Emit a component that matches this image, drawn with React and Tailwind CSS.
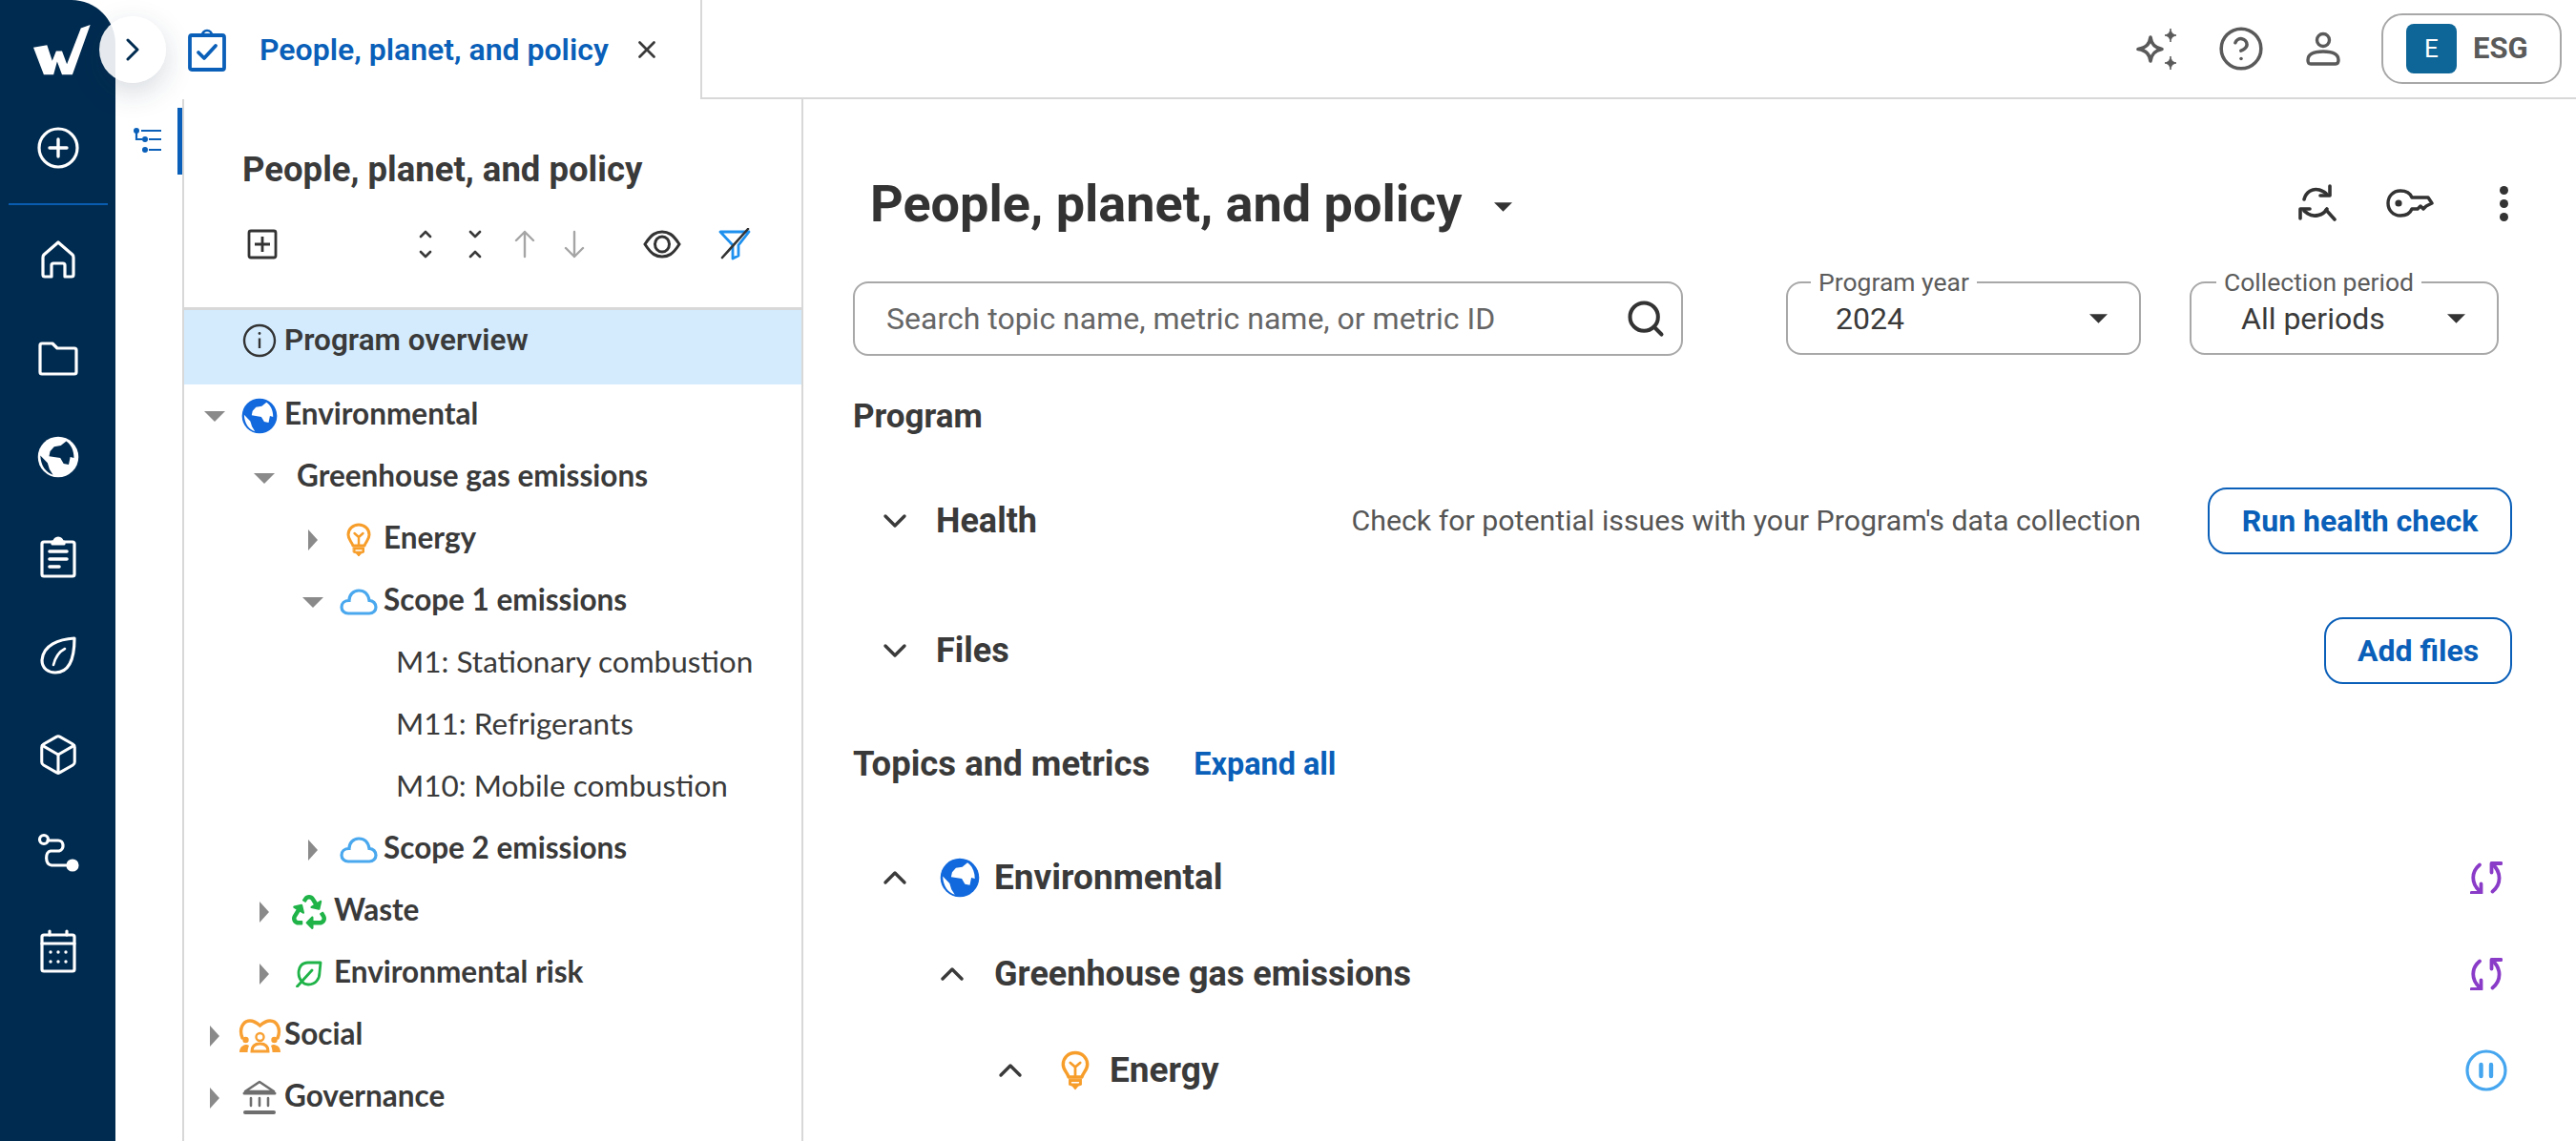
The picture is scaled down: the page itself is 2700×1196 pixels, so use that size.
import { Box, CircleHelp, Search, X } from 'lucide-react';
import { FaRecycle } from 'react-icons/fa';

const NAVY = '#002b50';

function Caret({ dir = 'down', className = '' }) {
  if (dir === 'right') {
    return (
      <svg width="12" height="22" viewBox="0 0 12 22" className={className}>
        <path d="M1 0 L11 11 L1 22 Z" fill="currentColor" />
      </svg>
    );
  }
  return (
    <svg width="22" height="12" viewBox="0 0 22 12" className={className}>
      <path d="M0 1 H22 L11 12 Z" fill="currentColor" />
    </svg>
  );
}

function Chevron({ up = false }) {
  return (
    <svg width="26" height="16" viewBox="0 0 26 16" fill="none" stroke="#3a3a3a" strokeWidth="3.4" strokeLinecap="round" strokeLinejoin="round">
      <path d={up ? 'M3 13 L13 3 L23 13' : 'M3 3 L13 13 L23 3'} />
    </svg>
  );
}

function GlobeIcon({ size = 38, color = '#1169dd', cut = '#fff' }) {
  return (
    <svg width={size} height={size} viewBox="0 0 24 24">
      <circle cx="12" cy="12" r="11.6" fill={color} />
      <path d="M16.6 3 L13.5 5.5 L9.7 6.2 L7.4 8.7 L6.8 11.6 L13.2 12.6 L15.1 15.8 L18 16.4 L18.9 12 L21 12.6 C21 8.5 19.5 5 16.6 3Z" fill={cut} />
      <path d="M1.8 11.2 L5.9 15.4 L7 19 L9 22.2 C5 21 2 17 1.8 11.2Z" fill={cut} />
    </svg>
  );
}

function BulbIcon({ width = 26, height = 36 }) {
  return (
    <svg width={width} height={height} viewBox="0 0 26 36" fill="none" stroke="#f79d2a" strokeLinecap="round" strokeLinejoin="round">
      <path strokeWidth="3" d="M13 2 C6.5 2 2 6.8 2 12.5 C2 17.5 5.5 19.5 7 24 H19 C20.5 19.5 24 17.5 24 12.5 C24 6.8 19.5 2 13 2Z" />
      <path strokeWidth="2.4" d="M8.5 11 L13 15 L17.5 11 M13 15 V23" />
      <path fill="#f79d2a" strokeWidth="1" d="M7.5 26 H18.5 V31 L15.5 32 L13 35 L10.5 32 L7.5 31Z" />
      <path stroke="#fff" strokeWidth="1.3" d="M10 29 H16" />
    </svg>
  );
}

function CloudIcon() {
  return (
    <svg width="40" height="28" viewBox="0 0 40 28" fill="none" stroke="#4aa8ee" strokeWidth="3.2">
      <path d="M9 26 H31 C35 26 38 23 38 19.5 C38 15.5 35 12.5 31 12.5 C30 6 26 2 20 2 C14 2 10 7 10 12.5 C5 12.5 2 15.5 2 19.5 C2 23 5 26 9 26Z" />
    </svg>
  );
}

function TreeLeafIcon() {
  return (
    <svg width="28" height="28" viewBox="0 0 28 28" fill="none" stroke="#1fb348" strokeWidth="2.8" strokeLinecap="round" strokeLinejoin="round">
      <path d="M26 2 H13 C6 2 3 7 3 13 C3 20 8 25 13 25 C21 25 25 19 25 12 Z" />
      <path d="M1.5 27 L17 10" />
    </svg>
  );
}

function SocialIcon() {
  return (
    <svg width="45" height="36" viewBox="0 0 45 36" fill="none" stroke="#f8a033">
      <path strokeWidth="3.4" strokeLinecap="round" d="M4 20 C0 10 5 2 12 2 C16 2 19 4 22.5 7 C26 4 29 2 33 2 C40 2 45 10 41 20" />
      <circle cx="22.5" cy="19" r="4" strokeWidth="2.4" />
      <circle cx="7.5" cy="22" r="3.2" fill="#f8a033" stroke="none" />
      <circle cx="37.5" cy="22" r="3.2" fill="#f8a033" stroke="none" />
      <path strokeWidth="3" d="M14 34 C14 28 18 26 22.5 26 C27 26 31 28 31 34Z" />
      <path fill="#f8a033" stroke="none" d="M1 35 C1 29 5 27 9 27 L11 28 C10 30 9.5 33 9.5 35Z M44 35 C44 29 40 27 36 27 L34 28 C35 30 35.5 33 35.5 35Z" />
    </svg>
  );
}

function BankIcon() {
  return (
    <svg width="36" height="37" viewBox="0 0 36 37" fill="none" stroke="#6e6e6e" strokeLinecap="round" strokeLinejoin="round">
      <path strokeWidth="2.6" d="M3 12 L18 2 L33 12 Z" />
      <path strokeWidth="3" d="M2 14 H34" />
      <path strokeWidth="2.6" d="M9 19 V27 M18 19 V27 M27 19 V27" />
      <path strokeWidth="4" d="M3 34 H33" />
    </svg>
  );
}

function SyncIcon() {
  return (
    <svg width="34" height="34" viewBox="0 0 34 34" fill="none" stroke="#8a3cc8" strokeWidth="3.8" strokeLinecap="round" strokeLinejoin="round">
      <path d="M10 3.5 C1 11 1 23 10 31" />
      <path d="M1.5 33 H11.5 V23.5" />
      <path d="M23.5 31.5 C33 24 33 11 23 2.5" />
      <path d="M32.5 2 H22.5 V11.5" />
    </svg>
  );
}

function PauseIcon() {
  return (
    <svg width="44" height="44" viewBox="0 0 44 44" fill="none" stroke="#45a6ef">
      <circle cx="22" cy="22" r="20" strokeWidth="3.2" />
      <path strokeWidth="4.4" strokeLinecap="round" d="M16.5 16 V28 M27 16 V28" />
    </svg>
  );
}

function NavIcon({ children, w = 42, h = 44, box = '0 0 42 44' }) {
  return (
    <svg width={w} height={h} viewBox={box} fill="none" stroke="#fff" strokeWidth="3.2" strokeLinecap="round" strokeLinejoin="round">
      {children}
    </svg>
  );
}

function Sidebar() {
  return (
    <aside className="w-[121px] shrink-0 rounded-tr-[46px] bg-[#002b50] flex flex-col items-center">
      <div className="h-[103px] w-full pl-[35px] pt-[26px]">
        <svg width="60" height="53" viewBox="30 18 176 154" preserveAspectRatio="none">
          <path fill="#fff" d="M30 87 L72 80 L88 128 L100 98 L118 98 L133 138 L176 28 L205 18 L150 170 L118 170 L103 130 L92 170 L62 170Z" />
        </svg>
      </div>
      <div className="h-[104px] w-full flex flex-col items-center">
        <div className="mt-[30px]">
          <NavIcon w={44} h={44} box="0 0 44 44">
            <circle cx="22" cy="22" r="20" />
            <path strokeWidth="3.4" d="M22 13 V31 M13 22 H31" />
          </NavIcon>
        </div>
        <div className="mt-[36px] h-[2px] w-[104px] shrink-0 bg-[#0a5cb0]" />
      </div>
      <div className="flex flex-col items-center">
        <div className="h-[104px] flex items-center mt-[13px]">
          <NavIcon w={36} h={40} box="0 0 36 40">
            <path d="M18 2 L33 15 Q34 16 34 18 V36 Q34 38 32 38 H25 V26 Q25 24 23 24 H13 Q11 24 11 26 V38 H4 Q2 38 2 36 V18 Q2 16 3 15 Z" />
          </NavIcon>
        </div>
        <div className="h-[103px] flex items-center">
          <NavIcon w={42} h={36} box="0 0 42 36">
            <path d="M2 4 Q2 2 4 2 H15 L20 7 H38 Q40 7 40 9 V32 Q40 34 38 34 H4 Q2 34 2 32Z" />
          </NavIcon>
        </div>
        <div className="h-[103px] flex items-center">
          <GlobeIcon size={44} color="#fff" cut={NAVY} />
        </div>
        <div className="h-[105px] flex items-center">
          <NavIcon w={40} h={46} box="0 0 40 46">
            <path d="M3 10 Q3 8 5 8 H35 Q37 8 37 10 V42 Q37 44 35 44 H5 Q3 44 3 42Z" />
            <path fill="#fff" d="M14 8 H16 A4 4 0 0 1 24 8 H26 V10 H14Z" />
            <path strokeWidth="3.6" d="M11 18 H29 M11 26 H29 M11 34 H21" />
          </NavIcon>
        </div>
        <div className="h-[104px] flex items-center">
          <NavIcon w={38} h={40} box="0 0 38 40">
            <path d="M36 2 C20 3 3 9 2 25 C2 34 9 38 16 38 C30 38 36 24 36 2Z" />
            <path strokeWidth="2.6" d="M14 30 C16 22 20 16 26 13" />
          </NavIcon>
        </div>
        <div className="h-[103px] flex items-center">
          <Box size={46} strokeWidth={1.6} color="#fff" />
        </div>
        <div className="h-[103px] flex items-center">
          <NavIcon w={44} h={42} box="0 0 44 42">
            <circle cx="7" cy="7" r="4.5" />
            <path d="M11 8 H22 C28 8 29 17 23 19 H14 C8 20 8 33 15 34 H32" />
            <circle cx="37" cy="34" r="5" fill="#fff" />
          </NavIcon>
        </div>
        <div className="h-[103px] flex items-center">
          <NavIcon w={40} h={46} box="0 0 40 46">
            <path d="M3 8 Q3 6 5 6 H35 Q37 6 37 8 V42 Q37 44 35 44 H5 Q3 44 3 42Z" />
            <path d="M3 15 H37 M11 2 V6 M29 2 V6" />
            <path strokeWidth="3.4" d="M12 24 V24.1 M20 24 V24.1 M28 24 V24.1 M12 34 V34.1 M20 34 V34.1 M28 34 V34.1" />
          </NavIcon>
        </div>
      </div>
    </aside>
  );
}

function TopBar() {
  return (
    <header className="h-[104px] flex shrink-0">
      <div className="w-[615px] flex items-center border-r-2 border-[#d8d8d8] pl-[76px]">
        <svg width="40" height="45" viewBox="0 0 40 45" fill="none" stroke="#0a5fb8" strokeWidth="3.8" strokeLinecap="round" strokeLinejoin="round">
          <path d="M2 9 Q2 7 4 7 H36 Q38 7 38 9 V41 Q38 43 36 43 H4 Q2 43 2 41Z" />
          <path strokeWidth="2.6" d="M15 7 A5 5 0 0 1 25 7" />
          <path d="M11 25 L17 31 L29 18" />
        </svg>
        <span className="ml-[35px] text-[32px] font-semibold text-[#0a5fb8] whitespace-nowrap">People, planet, and policy</span>
        <X size={30} strokeWidth={2.2} color="#3a3a3a" className="ml-[25px]" />
      </div>
      <div className="flex-1 flex items-center border-b-2 border-[#d8d8d8] pr-[15px] justify-end">
        <svg width="46" height="46" viewBox="0 0 46 46" fill="none" stroke="#5a5a5a" strokeWidth="3.6" strokeLinejoin="round">
          <path d="M16 11 C17 18 20 22 28 23.5 C20 25 17 29 16 36 C15 29 12 25 3 23.5 C12 22 15 18 16 11Z" />
          <path fill="#5a5a5a" strokeWidth="1" d="M37 2 C37.5 6 39 8 43 9 C39 10 37.5 12 37 16 C36.5 12 35 10 31 9 C35 8 36.5 6 37 2Z M37 31 C37.5 35 39 37 43 38 C39 39 37.5 41 37 45 C36.5 41 35 39 31 38 C35 37 36.5 35 37 31Z" />
        </svg>
        <CircleHelp size={50} strokeWidth={1.7} color="#5a5a5a" className="ml-[40px]" />
        <svg width="36" height="36" viewBox="0 0 36 36" fill="none" stroke="#5a5a5a" strokeWidth="3.4" className="ml-[43px]">
          <circle cx="18" cy="9" r="6.5" />
          <path d="M2 30 C2 23 10 21 18 21 C26 21 34 23 34 30 C34 33 33 34 31 34 H5 C3 34 2 33 2 30Z" />
        </svg>
        <div className="ml-[43px] w-[189px] h-[74px] rounded-[22px] border-2 border-[#a8a8a8] flex items-center pl-[24px]">
          <div className="w-[53px] h-[52px] rounded-[8px] bg-[#0e6698] text-white text-[26px] flex items-center justify-center">E</div>
          <span className="ml-[17px] text-[31px] font-bold text-[#5a5a5a]">ESG</span>
        </div>
      </div>
    </header>
  );
}

function TreeRow({ pad, caret, gap = '', box = 'w-[50px]', icon, textCls = 'font-bold', children }) {
  return (
    <div className={`h-[65px] flex items-center font-[Lato,sans-serif] text-[31.5px] text-[#3a3a3a] ${pad}`}>
      {caret && (
        <span className="w-[24px] flex justify-center text-[#8a8a8a]">
          <Caret dir={caret} />
        </span>
      )}
      {icon && <span className={`flex justify-center ${box} ${gap}`}>{icon}</span>}
      <span className={`whitespace-nowrap pb-[3px] ${icon ? 'ml-[1px]' : ''} ${textCls}`}>{children}</span>
    </div>
  );
}

function TreePanel() {
  return (
    <section className="w-[651px] shrink-0 border-x-2 border-[#d8d8d8] overflow-hidden">
      <div className="h-[221px] border-b-[3px] border-[#d8d8d8] flex flex-col">
        <h2 className="ml-[61px] mt-[52px] text-[36.5px] leading-[44px] font-bold text-[#3a3a3a] whitespace-nowrap">People, planet, and policy</h2>
        <div className="ml-[66px] mt-[39px] flex items-center">
          <svg width="32" height="32" viewBox="0 0 32 32" fill="none" stroke="#333" strokeWidth="2.8">
            <rect x="2" y="2" width="28" height="28" rx="2" />
            <path d="M16 8 V24 M8 16 H24" />
          </svg>
          <div className="ml-[129px] flex items-center text-[#3a3a3a]">
            <span className="w-[52px] flex justify-center">
              <svg width="16" height="32" viewBox="0 0 16 32" fill="none" stroke="currentColor" strokeWidth="2.6" strokeLinecap="round" strokeLinejoin="round">
                <path d="M3 8 L8 3 L13 8 M3 24 L8 29 L13 24" />
              </svg>
            </span>
            <span className="w-[52px] flex justify-center">
              <svg width="16" height="32" viewBox="0 0 16 32" fill="none" stroke="currentColor" strokeWidth="2.6" strokeLinecap="round" strokeLinejoin="round">
                <path d="M3 3 L8 8 L13 3 M3 29 L8 24 L13 29" />
              </svg>
            </span>
            <span className="w-[52px] flex justify-center">
              <svg width="24" height="32" viewBox="0 0 24 32" fill="none" stroke="#a5a5a5" strokeWidth="2.4" strokeLinecap="round" strokeLinejoin="round">
                <path d="M12 29 V3 M3 12 L12 3 L21 12" />
              </svg>
            </span>
            <span className="w-[52px] flex justify-center">
              <svg width="24" height="32" viewBox="0 0 24 32" fill="none" stroke="#a5a5a5" strokeWidth="2.4" strokeLinecap="round" strokeLinejoin="round">
                <path d="M12 3 V29 M3 20 L12 29 L21 20" />
              </svg>
            </span>
          </div>
          <span className="ml-[40px] w-[52px] flex justify-center">
            <svg width="40" height="30" viewBox="0 0 40 30" fill="none" stroke="#333" strokeWidth="3">
              <path d="M2 15 C9 4 14 2 20 2 C26 2 31 4 38 15 C31 26 26 28 20 28 C14 28 9 26 2 15Z" />
              <ellipse cx="20" cy="15" rx="7.5" ry="8" />
            </svg>
          </span>
          <span className="ml-[24px] w-[52px] flex justify-center">
            <svg width="34" height="34" viewBox="0 0 34 34" fill="none" strokeLinejoin="round" strokeLinecap="round">
              <path stroke="#1e90ee" strokeWidth="2.8" d="M2 4 H32 L21 18 V29 L15 32 V18 Z" />
              <path stroke="#333" strokeWidth="2.6" d="M31 1 L4 31" />
            </svg>
          </span>
        </div>
      </div>
      <div className="h-[78px] bg-[#d3ebfd] flex items-center pl-[44px] pb-[14px] text-[31.5px] font-semibold text-[#3a3a3a]">
        <span className="w-[50px] ml-[10px] flex justify-center">
          <svg width="36" height="36" viewBox="0 0 36 36" fill="none" stroke="#333" strokeWidth="2.4">
            <circle cx="18" cy="18" r="16" />
            <path d="M18 15.5 V26" />
            <circle cx="18" cy="10.5" r="1.4" fill="#333" stroke="none" />
          </svg>
        </span>
        <span className="ml-[1px]">Program overview</span>
      </div>
      <TreeRow pad="pl-[20px]" caret="down" gap="ml-[10px]" icon={<GlobeIcon />}>Environmental</TreeRow>
      <TreeRow pad="pl-[72px]" caret="down"><span className="ml-[22px]">Greenhouse gas emissions</span></TreeRow>
      <TreeRow pad="pl-[123px]" caret="right" gap="ml-[11px]" icon={<BulbIcon />}>Energy</TreeRow>
      <TreeRow pad="pl-[123px]" caret="down" gap="ml-[11px]" icon={<CloudIcon />}>Scope 1 emissions</TreeRow>
      <TreeRow pad="pl-[222px]" textCls="font-normal">M1: Stationary combustion</TreeRow>
      <TreeRow pad="pl-[222px]" textCls="font-normal">M11: Refrigerants</TreeRow>
      <TreeRow pad="pl-[222px]" textCls="font-normal">M10: Mobile combustion</TreeRow>
      <TreeRow pad="pl-[123px]" caret="right" gap="ml-[11px]" icon={<CloudIcon />}>Scope 2 emissions</TreeRow>
      <TreeRow pad="pl-[72px]" caret="right" gap="ml-[10px]" icon={<FaRecycle size={36} color="#1fb348" />}>Waste</TreeRow>
      <TreeRow pad="pl-[72px]" caret="right" gap="ml-[10px]" icon={<TreeLeafIcon />}>Environmental risk</TreeRow>
      <TreeRow pad="pl-[20px]" caret="right" gap="ml-[10px]" icon={<SocialIcon />}>Social</TreeRow>
      <TreeRow pad="pl-[20px]" caret="right" gap="ml-[10px]" icon={<BankIcon />}>Governance</TreeRow>
    </section>
  );
}

function SelectBox({ width, ml, label, value, pad, labelPad }) {
  return (
    <div className={`relative h-[77px] rounded-[16px] border-2 border-[#a8a8a8] flex items-center justify-between pr-[33px] ${width} ${ml} ${pad}`}>
      <span className={`absolute -top-[17px] bg-white px-[8px] text-[26.5px] leading-[32px] text-[#5c5c5c] whitespace-nowrap ${labelPad}`}>{label}</span>
      <span className="text-[32px] text-[#3a3a3a]">{value}</span>
      <Caret className="text-[#333] w-[19px] h-[11px]" />
    </div>
  );
}

function ActionRow({ title, description, action, mt, bw }) {
  return (
    <div className={`h-[70px] flex items-center pl-[31px] ${mt}`}>
      <Chevron />
      <span className="ml-[30px] text-[36px] font-bold text-[#3a3a3a]">{title}</span>
      {description && <span className="ml-auto text-[30.3px] text-[#555] whitespace-nowrap">{description}</span>}
      <button className={`${description ? 'ml-[70px]' : 'ml-auto'} ${bw} h-[70px] rounded-[20px] border-2 border-[#0a5fb8] text-[32px] font-bold text-[#0a5fb8]`}>
        {action}
      </button>
    </div>
  );
}

function TopicRow({ pad, gap = '', icon, text = 'text-[37px]', ml, status, children }) {
  return (
    <div className={`h-[101px] flex items-center pr-[5px] ${pad}`}>
      <Chevron up />
      {icon && <span className={`w-[44px] flex justify-center ${gap}`}>{icon}</span>}
      <span className={`font-bold text-[#3a3a3a] whitespace-nowrap ${text} ${ml}`}>{children}</span>
      <span className="ml-auto w-[44px] flex justify-center">{status}</span>
    </div>
  );
}

function MainPanel() {
  return (
    <main className="flex-1 pl-[52px] pr-[67px] min-w-0">
      <div className="mt-[69px] h-[80px] flex items-center pl-[18px]">
        <h1 className="text-[54px] font-bold text-[#333] whitespace-nowrap">People, planet, and policy</h1>
        <Caret className="ml-[34px] mt-[6px] text-[#333] w-[19px] h-[11px]" />
        <svg width="40" height="40" viewBox="0 0 40 40" fill="none" stroke="#333" strokeWidth="3.6" strokeLinecap="round" strokeLinejoin="round" className="ml-auto">
          <path d="M6 16 C8 8 15 4 22 6 C25 7 28 8 30 11" />
          <path d="M33 2 V12 H23" />
          <path d="M30 26 C26 33 16 35 10 31 L6 28" />
          <path d="M2 36 V26 H12" />
          <path d="M29 27 L38 37" />
        </svg>
        <svg width="50" height="30" viewBox="0 0 50 30" fill="none" stroke="#333" strokeWidth="3.4" strokeLinejoin="round" className="ml-[52px]">
          <path d="M27 9 C25 4 20 2 15 2 C7 2 2 8 2 15 C2 22 7 28 15 28 C20 28 25 26 27 21 H33 L36 18 L39 21 L42 18 L48 15 L44 9Z" />
          <circle cx="13" cy="15" r="3.6" fill="#333" stroke="none" />
        </svg>
        <span className="ml-[64px] w-[18px] flex flex-col items-center gap-[5px]">
          <span className="w-[9px] h-[9px] rounded-full bg-[#333]" />
          <span className="w-[9px] h-[9px] rounded-full bg-[#333]" />
          <span className="w-[9px] h-[9px] rounded-full bg-[#333]" />
        </span>
      </div>
      <div className="mt-[42px] flex">
        <div className="w-[870px] h-[78px] rounded-[16px] border-2 border-[#a8a8a8] flex items-center justify-between pl-[33px] pr-[15px]">
          <span className="text-[32px] text-[#666] whitespace-nowrap">Search topic name, metric name, or metric ID</span>
          <Search size={44} strokeWidth={2.2} color="#333" />
        </div>
        <SelectBox width="w-[372px]" ml="ml-[108px]" pad="pl-[50px]" labelPad="left-[24px]" label="Program year" value="2024" />
        <SelectBox width="w-[324px]" ml="ml-[51px]" pad="pl-[52px]" labelPad="left-[26px]" label="Collection period" value="All periods" />
      </div>
      <div className="mt-[40px] h-[48px] flex items-center text-[35px] font-bold text-[#3a3a3a]">Program</div>
      <ActionRow mt="mt-[50px]" title="Health" description="Check for potential issues with your Program's data collection" action="Run health check" bw="w-[319px]" />
      <ActionRow mt="mt-[66px]" title="Files" action="Add files" bw="w-[197px]" />
      <div className="mt-[60px] h-[48px] flex items-center">
        <span className="text-[36.5px] font-bold text-[#3a3a3a]">Topics and metrics</span>
        <span className="ml-[46px] text-[32.4px] font-bold text-[#0a5fb8]">Expand all</span>
      </div>
      <div className="mt-[44px]">
        <TopicRow pad="pl-[31px]" gap="ml-[33px]" ml="ml-[14px]" icon={<GlobeIcon size={42} />} status={<SyncIcon />}>Environmental</TopicRow>
        <TopicRow pad="pl-[91px]" ml="ml-[31px]" text="text-[36px]" status={<SyncIcon />}>Greenhouse gas emissions</TopicRow>
        <TopicRow pad="pl-[152px]" gap="ml-[33px]" ml="ml-[14px]" icon={<BulbIcon width={30} height={42} />} status={<PauseIcon />}>Energy</TopicRow>
      </div>
    </main>
  );
}

export default function App() {
  return (
    <div className="relative flex h-screen w-full overflow-hidden bg-white font-[Roboto,sans-serif] text-[#3a3a3a]">
      <Sidebar />
      <div className="flex-1 flex flex-col min-w-0">
        <TopBar />
        <div className="flex-1 flex min-h-0">
          <div className="w-[70px] shrink-0 pt-[9px]">
            <div className="h-[70px] border-r-[5px] border-[#0a5fb8] flex items-center justify-center">
              <svg width="30" height="30" viewBox="0 0 30 30" fill="none" stroke="#0a5fb8" strokeWidth="2.2">
                <circle cx="4" cy="4" r="3" fill="#0a5fb8" stroke="none" />
                <path d="M4 4 V13 H10 M9 4 H30 M17 13 H30 M17 24 H30" />
                <circle cx="13" cy="13" r="3" fill="#0a5fb8" stroke="none" />
                <circle cx="13" cy="24" r="3" fill="#0a5fb8" stroke="none" />
              </svg>
            </div>
          </div>
          <TreePanel />
          <MainPanel />
        </div>
      </div>
      {/* sidebar toggle sits over the sidebar edge */}
      <button className="absolute left-[104px] top-[17px] w-[70px] h-[70px] rounded-full bg-white/90 shadow-[0_10px_30px_rgba(30,50,80,0.18)] flex items-center justify-center">
        <svg width="14" height="24" viewBox="0 0 14 24" fill="none" stroke={NAVY} strokeWidth="3" strokeLinecap="round" strokeLinejoin="round">
          <path d="M2 2 L12 12 L2 22" />
        </svg>
      </button>
    </div>
  );
}
